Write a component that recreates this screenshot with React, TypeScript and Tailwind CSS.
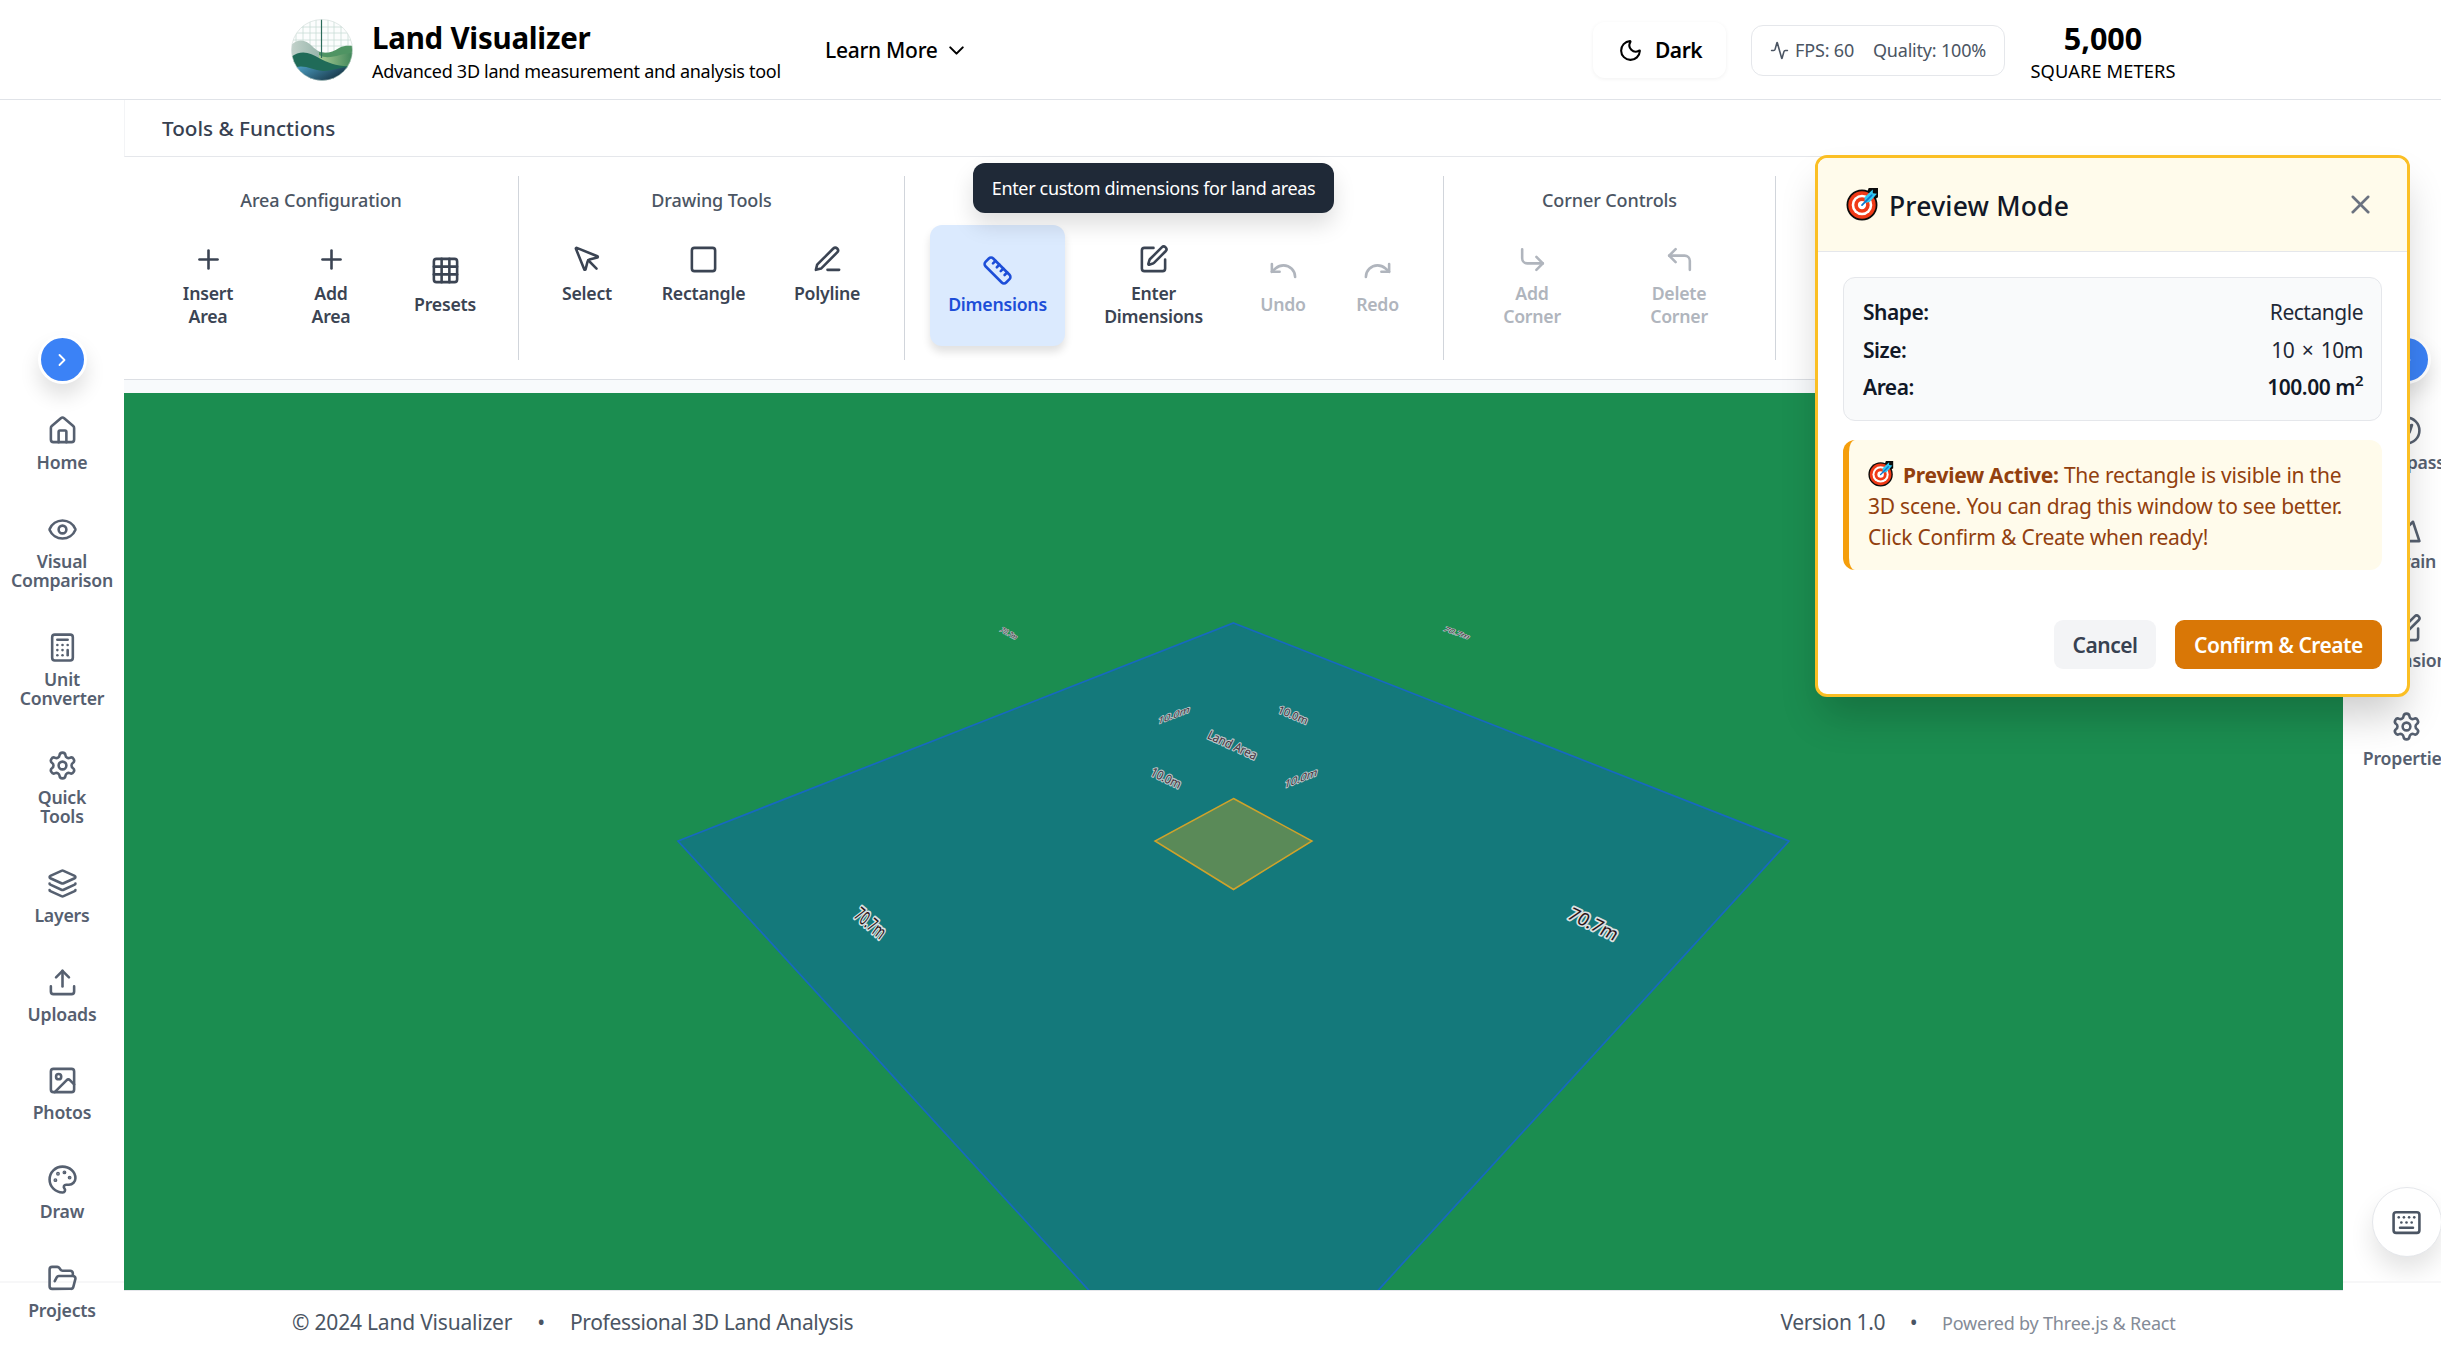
import React from "react";
import {
  Activity, Calculator, ChevronDown, ChevronRight, Compass, CornerDownRight, CornerUpLeft, Eye, FolderOpen,
  Grid3x3, House, Image, Keyboard, Layers, Moon, Mountain, MousePointer, Palette, Plus, Redo, Ruler, Settings,
  Square, SquarePen, Undo, Upload, X,
} from "lucide-react";

type IconType = React.ComponentType<{ size?: number; className?: string; strokeWidth?: number }>;

function PenLineIcon({ size = 31 }: { size?: number }) {
  return (
    <svg width={size} height={size} viewBox="0 0 24 24" fill="none" stroke="currentColor" strokeWidth="2" strokeLinecap="round" strokeLinejoin="round">
      <path d="M12 20h9" />
      <path d="M16.5 3.5a2.12 2.12 0 0 1 3 3L7 19l-4 1 1-4Z" />
    </svg>
  );
}

function Logo() {
  return (
    <svg className="size-[62px] shrink-0" viewBox="0 0 62 62">
      <defs>
        <clipPath id="disc"><circle cx="31" cy="31" r="30.5" /></clipPath>
        <linearGradient id="water" x1="0" x2="1" y1="0" y2="0.4">
          <stop offset="0.1" stopColor="#4b9cc0" /><stop offset="1" stopColor="#14303f" />
        </linearGradient>
        <linearGradient id="mist" x1="0" x2="1">
          <stop offset="0" stopColor="#c3d2cb" /><stop offset="1" stopColor="#8fb0a5" />
        </linearGradient>
        <linearGradient id="field" x1="0" x2="1">
          <stop offset="0" stopColor="#a9cc94" /><stop offset="1" stopColor="#3f8559" />
        </linearGradient>
      </defs>
      <g clipPath="url(#disc)">
        <rect width="62" height="62" fill="#fcfdfd" />
        <path d="M5 0V40M12 0V40M19 0V40M25 0V40M37 0V40M43 0V40M50 0V40M57 0V40M0 8H62M0 14H62M0 21H62M0 27H62M0 34H62" stroke="#c9dcd5" strokeWidth="0.8" />
        <path d="M0 26C8 19 15 21 21 27C26 32 29 33 34 34V45H0Z" fill="url(#mist)" />
        <path d="M28 33C36 35 42 33 48 29C54 26 58 27 62 27V50H28Z" fill="#4f9463" />
        <path d="M28 36C38 42 50 34 62 34V50H28Z" fill="url(#field)" />
        <path d="M0 38C10 30 20 34 28 39C38 44 46 48 62 47V62H0Z" fill="#206b58" />
        <path d="M0 50C12 44 20 51 32 52C44 52 52 47 62 48V62H0Z" fill="url(#water)" />
        <path d="M30.500 0V39" stroke="#2b6b5a" strokeWidth="1.2" />
      </g>
      <circle cx="31" cy="31" r="30.500" fill="none" stroke="#cfdad6" strokeWidth="0.6" />
    </svg>
  );
}

function Target({ className }: { className: string }) {
  return (
    <svg className={className} viewBox="0 0 32 32">
      <circle cx="15.500" cy="16.500" r="15" fill="#0b0b0b" />
      <path d="M22 0h9v9l-6 4-6-5Z" fill="#0b0b0b" />
      <circle cx="15.500" cy="16.500" r="13.300" fill="#f03a17" />
      <circle cx="15.500" cy="16.500" r="10" fill="#fff" />
      <circle cx="15.500" cy="16.500" r="7.500" fill="#f03a17" />
      <circle cx="15.500" cy="16.500" r="4" fill="#fff" />
      <path d="M18 9 26 1.500V5l4 .5-7 8-5 1Z" fill="#33c9f3" />
      <path d="M15.500 16.500 25 7" stroke="#0b78d0" strokeWidth="1.700" strokeLinecap="round" />
    </svg>
  );
}

function Header() {
  return (
    <header className="flex h-[100px] shrink-0 items-center border-b border-[#e0e3e8] bg-white pl-[291px] pr-[265px] pt-px text-black">
      <Logo />
      <div className="ml-[19px] w-[408px] pt-[2px]">
        <div className="text-[29.500px] font-bold leading-[40px] tracking-[-0.25px]">Land Visualizer</div>
        <div className="text-[18px] leading-[26px] tracking-[-0.29px] whitespace-nowrap">Advanced 3D land measurement and analysis tool</div>
      </div>
      <div className="ml-[45px] flex items-center gap-[6px] pt-px text-[21px] font-medium tracking-[-0.28px]">
        Learn More <ChevronDown size={25} />
      </div>
      <div className="ml-auto flex h-[56px] w-[133px] items-center gap-[12px] rounded-xl pl-[25px] pt-px text-[21px] font-semibold tracking-[-0.5px] shadow-[0_1px_4px_rgba(0,0,0,0.06)]">
        <Moon size={25} /> Dark
      </div>
      <div className="ml-[25px] flex h-[51px] w-[254px] items-center rounded-xl border-[1.5px] border-gray-200 pl-[18px] text-[18px] text-[#4b5563]">
        <Activity size={19} />
        <span className="ml-[6px] w-[78px] tracking-[-0.15px]">FPS: 60</span>
        <span className="tracking-[-0.2px]">Quality: 100%</span>
      </div>
      <div className="-mr-[5px] ml-[20px] w-[156px] pt-[2px] text-center">
        <div className="text-[30.500px] font-bold leading-[40px]">5,000</div>
        <div className="text-[18.300px] leading-[26px] tracking-[0.1px] whitespace-nowrap">SQUARE METERS</div>
      </div>
    </header>
  );
}

function Item({ icon: Icon, lines, label }: { icon: IconType; lines?: number; label: string }) {
  return (
    <div className={`flex shrink-0 flex-col items-center text-[#566070] ${lines === 2 ? "h-[118px]" : "h-[98.800px]"}`}>
      <Icon size={31} />
      <span className="mt-[7px] text-center text-[17.700px] font-semibold leading-[18.800px] tracking-[-0.2px] whitespace-pre-line">{label}</span>
    </div>
  );
}

function BlueKnob() {
  return (
    <div className="mx-auto flex size-[49px] shrink-0 items-center justify-center rounded-full border-[3px] border-white bg-[#3b82f6] text-white shadow-[0_12px_20px_rgba(0,0,0,0.12)]">
      <ChevronRight size={20} strokeWidth={2.200} />
    </div>
  );
}

function LeftSidebar() {
  return (
    <aside className="h-[1253px] w-[124px] shrink-0 bg-white">
      <div className="h-[1183px] border-b-2 border-[#f7f7f8] pt-[235px]">
        <BlueKnob />
        <div className="mt-[31px]">
          <Item icon={House} label="Home" />
          <Item icon={Eye} lines={2} label={"Visual\nComparison"} />
          <Item icon={Calculator} lines={2} label={"Unit\nConverter"} />
          <Item icon={Settings} lines={2} label={"Quick\nTools"} />
          <Item icon={Layers} label="Layers" />
          <Item icon={Upload} label="Uploads" />
          <Item icon={Image} label="Photos" />
          <Item icon={Palette} label="Draw" />
          <Item icon={FolderOpen} label="Projects" />
        </div>
      </div>
    </aside>
  );
}

function RightSidebar() {
  return (
    <aside className="h-[1183px] w-[98px] shrink-0 overflow-hidden border-b-2 border-[#f7f7f8] bg-white">
      <div className="flex w-[127px] flex-col pt-[235px]">
        <BlueKnob />
        <div className="mt-[31px]">
          <Item icon={Compass} label="Compass" />
          <Item icon={Mountain} label="Terrain" />
          <Item icon={SquarePen} label="Dimensions" />
          <Item icon={Settings} label="Properties" />
        </div>
        <div className="mx-auto mt-[377px] flex size-[70px] items-center justify-center rounded-full border border-gray-200 bg-white text-[#4b5563] shadow-[0_14px_24px_rgba(0,0,0,0.11)]">
          <Keyboard size={31} />
        </div>
      </div>
    </aside>
  );
}

function Tool({ icon: Icon, label, tone = "text-[#3b4453]", className = "" }: { icon: IconType; label: string; tone?: string; className?: string }) {
  return (
    <div className={`flex shrink-0 flex-col items-center ${tone} ${className}`}>
      <Icon size={31} />
      <span className="mt-[7px] text-center text-[17.700px] font-semibold leading-[23.300px] tracking-[-0.25px] whitespace-pre-line">{label}</span>
    </div>
  );
}

function Group({ title, className, children }: { title: string; className: string; children: React.ReactNode }) {
  return (
    <section className={`h-[184px] shrink-0 border-r-[1.500px] border-[#d1d5db] pt-[11px] ${className}`}>
      <h3 className="h-[27px] text-center text-[18px] font-medium leading-[27px] tracking-[-0.1px] text-[#4b5563]">{title}</h3>
      <div className="mt-[11px] flex h-[121px]">{children}</div>
    </section>
  );
}

function Ribbon() {
  const off = "text-[#b0b5bd]";
  return (
    <>
      <div className="flex h-[57px] items-center border-b-[1.500px] border-l border-gray-200 border-l-gray-100 bg-white pl-[37px] pt-[2px] text-[20.700px] font-medium text-[#374151]">
        Tools &amp; Functions
      </div>
      <div className="flex h-[223px] overflow-hidden border-b border-[#dcdfe4] bg-white pt-[19px]">
        <Group title="Area Configuration" className="w-[395px]">
          <Tool icon={Plus} label={"Insert\nArea"} className="ml-[24px] w-[120px] pt-[19px]" />
          <Tool icon={Plus} label={"Add\nArea"} className="w-[126px] pt-[19px]" />
          <Tool icon={Grid3x3} label="Presets" className="w-[102px] pt-[30px]" />
        </Group>
        <Group title="Drawing Tools" className="w-[386px]">
          <Tool icon={MousePointer} label="Select" className="ml-[13px] w-[110px] pt-[19px]" />
          <Tool icon={Square} label="Rectangle" className="w-[123px] pt-[19px]" />
          <Tool icon={PenLineIcon} label="Polyline" className="w-[124px] pt-[19px]" />
        </Group>
        <Group title="" className="w-[539px]">
          <Tool icon={Ruler} label="Dimensions" tone="text-[#1d4ed8]" className="ml-[25px] h-[121px] w-[135px] rounded-xl bg-[#dbeafe] pt-[30px] shadow-[0_6px_9px_rgba(0,0,0,0.12)]" />
          <Tool icon={SquarePen} label={"Enter\nDimensions"} className="ml-[23px] w-[131px] pt-[19px]" />
          <Tool icon={Undo} label="Undo" tone={off} className="ml-[16px] w-[96px] pt-[30px]" />
          <Tool icon={Redo} label="Redo" tone={off} className="w-[93px] pt-[30px]" />
        </Group>
        <Group title="Corner Controls" className="w-[332px]">
          <Tool icon={CornerDownRight} label={"Add\nCorner"} tone={off} className="ml-[18px] w-[140px] pt-[19px]" />
          <Tool icon={CornerUpLeft} label={"Delete\nCorner"} tone={off} className="w-[154px] pt-[19px]" />
        </Group>
      </div>
    </>
  );
}

/* u is the vector along the baseline, v the vector from baseline to cap height. */
const labels: { t: string; c: [number, number]; u: [number, number]; v: [number, number]; soft?: boolean }[] = [
  { t: "70.7m", c: [885, 240.500], u: [16, 9], v: [4, -3.500], soft: true },
  { t: "70.7m", c: [1333, 240], u: [25, 9], v: [4, -3.500], soft: true },
  { t: "10.0m", c: [1050, 322], u: [32, -12], v: [2, -7], soft: true },
  { t: "10.0m", c: [1169, 322], u: [29, 12], v: [3, -7], soft: true },
  { t: "Land Area", c: [1108.500, 352], u: [48, 22], v: [4, -8], soft: true },
  { t: "10.0m", c: [1042, 385], u: [29, 14], v: [4, -8], soft: true },
  { t: "10.0m", c: [1177, 385], u: [33, -13], v: [2, -8], soft: true },
  { t: "70.7m", c: [746.500, 530], u: [27, 23], v: [8, -11] },
  { t: "70.7m", c: [1469.500, 531], u: [48, 23], v: [7, -11] },
];

function Scene() {
  return (
    <svg className="block h-[897px] w-[2219px] bg-[#1b8d50]" viewBox="0 0 2219 897">
      <path d="M1109.500 230 1665 448 1248 904H971L554 448Z" fill="#14797b" stroke="#1769c0" strokeWidth="1.700" />
      <path d="M1109.500 405.500 1188 448 1109.500 496.500 1031 448Z" fill="#5a8a58" stroke="#cfa32b" strokeWidth="1.500" />
      {labels.map(({ t, c, u, v, soft }, i) => (
        <text
          key={i}
          transform={`matrix(${u[0] / 30} ${u[1] / 30} ${-v[0] / 7.1} ${-v[1] / 7.1} ${c[0] - (u[0] + v[0]) / 2} ${c[1] - (u[1] + v[1]) / 2})`}
          textLength="30"
          lengthAdjust="spacingAndGlyphs"
          fontSize="10"
          fill={soft ? "#43303a" : "#2b1518"}
          stroke={soft ? "#b9c5c8" : "#dce2e2"}
          strokeWidth="1.900"
          strokeLinejoin="round"
          style={{ paintOrder: "stroke" }}
        >
          {t}
        </text>
      ))}
    </svg>
  );
}

function Row({ name, value, valueClass = "" }: { name: string; value: React.ReactNode; valueClass?: string }) {
  return (
    <div className="flex h-[37.500px] items-center justify-between tracking-[-0.48px]">
      <span className="font-semibold text-[#111827]">{name}</span>
      <span className={valueClass}>{value}</span>
    </div>
  );
}

function PreviewPanel() {
  return (
    <div className="absolute left-[1815px] top-[155px] z-20 h-[542px] w-[595px] overflow-hidden rounded-xl border-[3px] border-[#fbbf24] bg-white text-[21px] text-[#1f2937] shadow-[0_24px_40px_-6px_rgba(0,0,0,0.2)]">
      <div className="flex h-[94px] items-center border-b-[1.500px] border-gray-200 bg-[#fffbeb] pl-[28px] pr-[31px]">
        <Target className="size-[33px]" />
        <span className="ml-[10px] pt-[4px] text-[26.500px] font-medium tracking-[0.2px] text-[#111827]">Preview Mode</span>
        <X size={31} className="ml-auto text-[#6b7280]" />
      </div>
      <div className="px-[25px] pt-[25px]">
        <div className="h-[144px] rounded-xl border-[1.500px] border-gray-200 bg-[#f9fafb] pl-[19px] pr-[18px] pt-[16px]">
          <Row name="Shape:" value="Rectangle" />
          <Row name="Size:" value="10 × 10m" valueClass="[word-spacing:2.5px]" />
          <Row name="Area:" value={<>100.00 m<sup className="relative top-[-9px] align-baseline text-[15px] leading-none">2</sup></>} valueClass="font-semibold text-[#111827]" />
        </div>
        <div className="mt-[19px] h-[130px] rounded-xl border-l-[6px] border-[#f59e0b] bg-[#fffbeb] pl-[19px] pt-[20px] leading-[31px] tracking-[-0.23px] text-[#92400e] whitespace-nowrap">
          <Target className="mr-[9px] inline size-[26px] align-[-4px]" />
          <b>Preview Active:</b> The rectangle is visible in the<br />
          3D scene. You can drag this window to see better.<br />
          Click Confirm &amp; Create when ready!
        </div>
        <div className="mt-[50px] flex justify-end gap-[19px] font-semibold tracking-[-0.5px]">
          <button className="h-[49px] w-[102px] rounded-[9px] bg-[#f3f4f6] pt-[2px] text-[#374151]">Cancel</button>
          <button className="h-[49px] w-[207px] rounded-[9px] bg-[#d97706] pt-[2px] text-white whitespace-nowrap">Confirm &amp; Create</button>
        </div>
      </div>
    </div>
  );
}

function Footer() {
  return (
    <footer className="flex h-[63px] items-center border-t border-gray-200 bg-white pl-[168px] pr-[167px] pt-[2px] text-[21px] tracking-[-0.4px] text-[#4b5563] whitespace-nowrap">
      <span className="w-[219px] tracking-[-0.2px]">© 2024 Land Visualizer</span>
      <span className="w-[60px] text-center">•</span>
      <span className="-ml-px tracking-[-0.35px]">Professional 3D Land Analysis</span>
      <span className="ml-auto">Version 1.0</span>
      <span className="w-[57px] text-center">•</span>
      <span className="w-[234px] text-[18px] tracking-[-0.2px] text-[#848b97]">Powered by Three.js &amp; React</span>
    </footer>
  );
}

export default function App() {
  return (
    <div className="relative flex h-[1353px] w-[2441px] flex-col overflow-hidden bg-white font-['Noto_Sans','Open_Sans',sans-serif]">
      <Header />
      <div className="flex">
        <LeftSidebar />
        <main className="w-[2219px] shrink-0">
          <Ribbon />
          <div className="h-[13px] bg-[#f8fafc]" />
          <Scene />
          <Footer />
        </main>
        <RightSidebar />
      </div>
      <div className="absolute left-[973px] top-[163px] flex h-[50px] w-[361px] items-center justify-center rounded-xl bg-[#1f2937] pt-px text-[18px] tracking-[-0.34px] text-white shadow-[0_12px_22px_rgba(0,0,0,0.13)] whitespace-nowrap">
        Enter custom dimensions for land areas
      </div>
      <PreviewPanel />
    </div>
  );
}
